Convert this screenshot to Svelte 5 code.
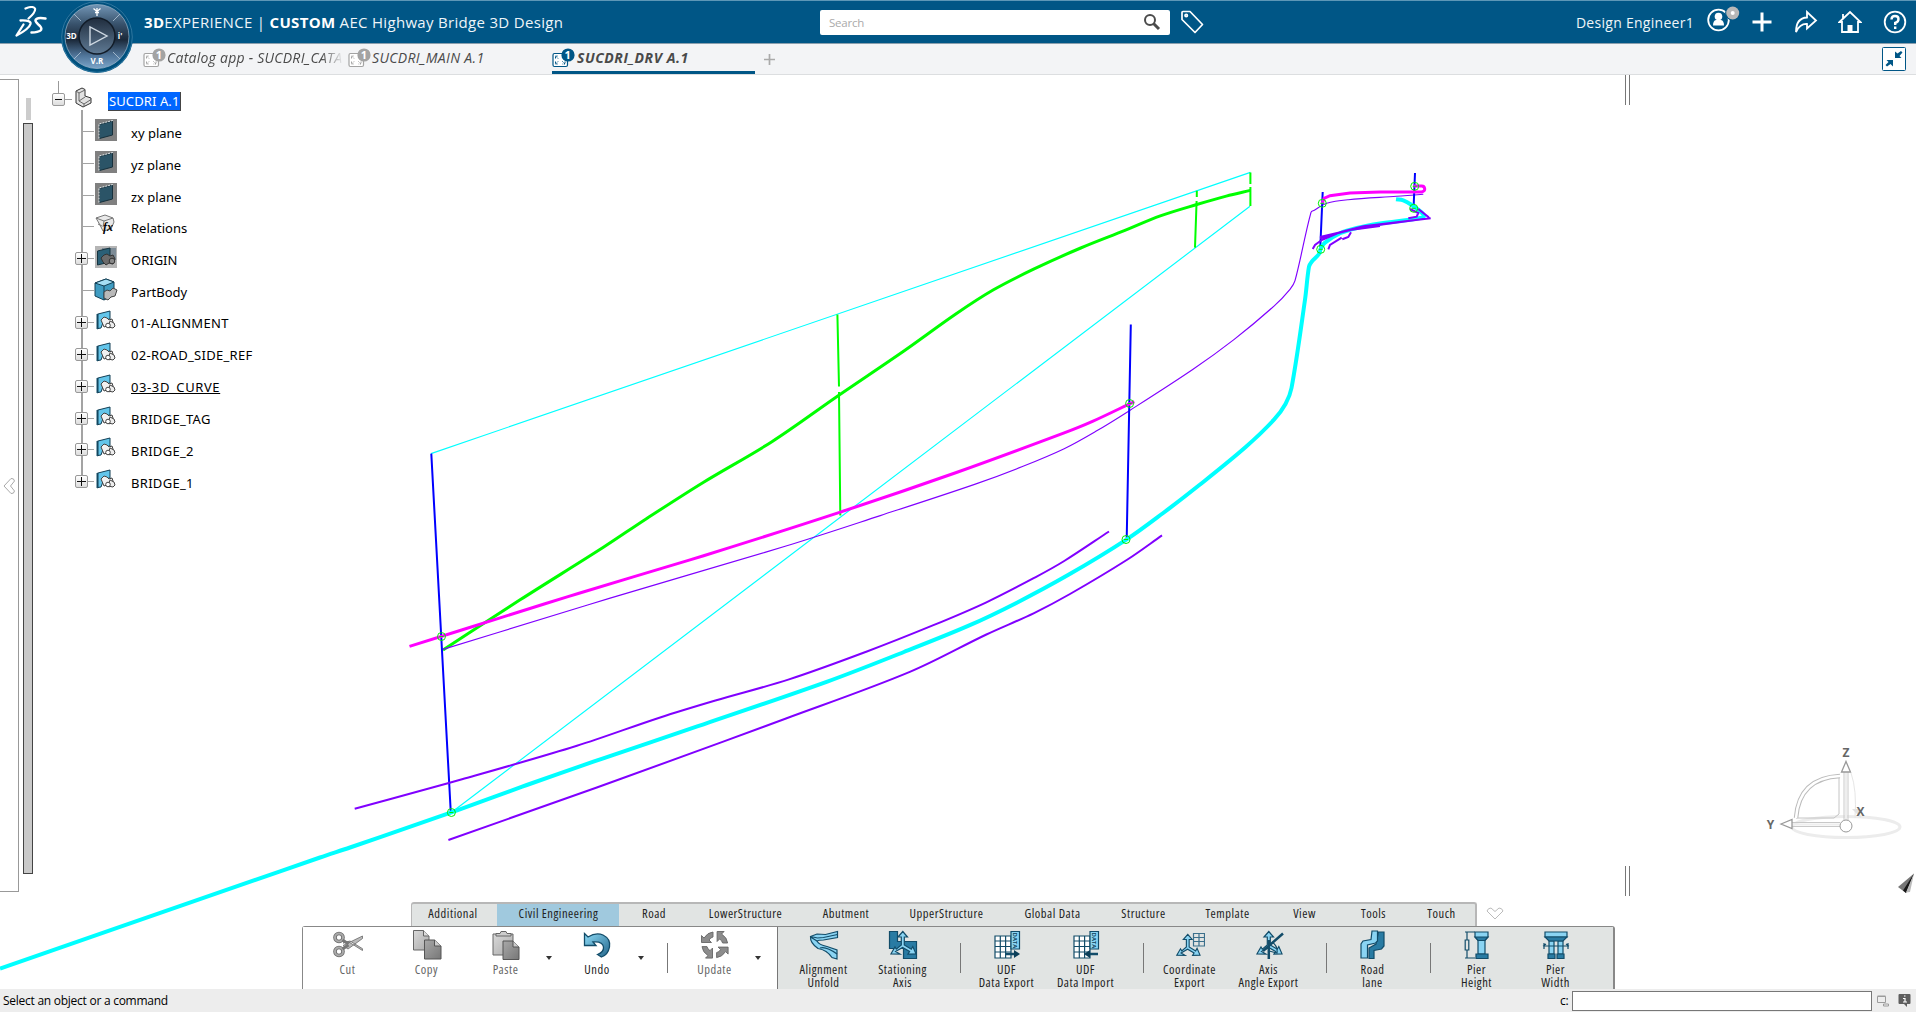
<script>
  const tree = [
    { label: 'xy plane', icon: 'plane' },
    { label: 'yz plane', icon: 'plane' },
    { label: 'zx plane', icon: 'plane' },
    { label: 'Relations', icon: 'relations' },
    { label: 'ORIGIN', icon: 'origin', open: true },
    { label: 'PartBody', icon: 'body' },
    { label: '01-ALIGNMENT', icon: 'set', open: true },
    { label: '02-ROAD_SIDE_REF', icon: 'set', open: true },
    { label: '03-3D_CURVE', icon: 'set', open: true, current: true },
    { label: 'BRIDGE_TAG', icon: 'set', open: true },
    { label: 'BRIDGE_2', icon: 'set', open: true },
    { label: 'BRIDGE_1', icon: 'set', open: true }
  ];

  const sections = ['Additional', 'Civil Engineering', 'Road', 'LowerStructure', 'Abutment', 'UpperStructure',
    'Global Data', 'Structure', 'Template', 'View', 'Tools', 'Touch'];

  const editTools = [
    { label: 'Cut', icon: 'cut', off: true },
    { label: 'Copy', icon: 'copy', off: true },
    { label: 'Paste', icon: 'paste', off: true, menu: true },
    { label: 'Undo', icon: 'undo', menu: true },
    { sep: true },
    { label: 'Update', icon: 'update', off: true, menu: true }
  ];

  const civilTools = [
    { label: 'Alignment\nUnfold', icon: 'unfold' },
    { label: 'Stationing\nAxis', icon: 'station' },
    { sep: true },
    { label: 'UDF\nData Export', icon: 'export' },
    { label: 'UDF\nData Import', icon: 'import' },
    { sep: true },
    { label: 'Coordinate\nExport', icon: 'coord' },
    { label: 'Axis\nAngle Export', icon: 'angle' },
    { sep: true },
    { label: 'Road\nlane', icon: 'lane' },
    { sep: true },
    { label: 'Pier\nHeight', icon: 'pierh' },
    { label: 'Pier\nWidth', icon: 'pierw' }
  ];

  const points = [[441.5, 636.5], [451.4, 812.5], [1129.6, 403.5], [1126, 539.5], [1322.3, 203.3], [1320.7, 249.3], [1414.7, 186.3], [1413.7, 208.3]];

  // Catmull-Rom spline through a list of [x, y] knots, as SVG path data.
  function spline(p) {
    let d = `M${p[0]}`;
    for (let i = 0; i < p.length - 1; i++) {
      const a = p[i - 1] ?? p[i], b = p[i], c = p[i + 1], e = p[i + 2] ?? c;
      const len = Math.hypot(c[0] - b[0], c[1] - b[1]);
      const h1 = len / (Math.hypot(c[0] - a[0], c[1] - a[1]) || 1) / 3;
      const h2 = len / (Math.hypot(e[0] - b[0], e[1] - b[1]) || 1) / 3;
      d += `C${b[0] + (c[0] - a[0]) * h1},${b[1] + (c[1] - a[1]) * h1} ${c[0] - (e[0] - b[0]) * h2},${c[1] - (e[1] - b[1]) * h2} ${c}`;
    }
    return d;
  }

  const profile = spline([[443, 650], [519.7, 600.1], [603.4, 547.3], [646.4, 518.7], [703.6, 482.2], [771.9, 441.7], [838.5, 395.5], [903.9, 351], [955.8, 314], [993.5, 289.8], [1033.6, 269.2], [1080.7, 248], [1124.9, 230.4], [1160.3, 215.9], [1196.8, 204.5], [1226.3, 196.1], [1250.4, 190.4]]);
  const deckLow = spline([[443, 649.4], [609.3, 598.4], [786, 546], [880.3, 515.6], [974.6, 484.4], [1021.8, 466.8], [1064.2, 448.7], [1095.4, 431.6], [1129, 410.9], [1192.7, 369.5], [1233.9, 339.6], [1274, 306.1], [1290, 289.3], [1295, 280.7], [1311, 212.3], [1314.3, 210.3], [1326.7, 203.3], [1348.3, 199.7], [1396.7, 196.3], [1423.3, 194.3]]);
  const deck = spline([[409.5, 646.4], [568, 596.6], [703.6, 555.7], [840.3, 512.1], [956.4, 472.5], [1064.2, 432.9], [1092.5, 421.4], [1134.3, 401.6]]);
  const road = spline([[0, 968.5], [320, 857.5], [350, 847.5], [451.4, 812.3], [526.8, 785], [593.4, 761.7], [703.6, 724.3], [827.3, 681.6], [903.9, 652], [968.7, 625.7], [1015.9, 603.2], [1068.9, 574.6], [1126.7, 539.4], [1163.2, 513], [1199.7, 484.8], [1245.7, 447], [1274, 419.7], [1285.5, 404], [1291.5, 388], [1305, 299.7], [1309, 266.7], [1311.7, 261.7], [1319, 254], [1321, 248], [1325, 242.7], [1340, 233.3], [1356.7, 228], [1380, 223.5], [1421.7, 217.7], [1424, 215], [1411.7, 205], [1403.3, 200.3], [1396, 199.3]]);
  const edgeLeft = spline([[354.7, 808.8], [462, 779.3], [576.9, 745.8], [659.4, 717.7], [715.4, 700.5], [789, 679.4], [865.6, 652], [933.4, 625.2], [986.4, 602.3], [1035.3, 577.3], [1064.2, 561], [1109, 531.5]]);
  const edgeRight = spline([[448.4, 840], [621, 778.8], [786, 718.5], [909.8, 671.9], [986.4, 634.5], [1033.6, 613.3], [1070, 594], [1126.7, 560], [1162, 535.4]]);
</script>

{#snippet tabIcon(active)}
  <svg class="tab-icon" class:active width="24" height="22" viewBox="0 0 24 22">
    <rect x="1" y="6.5" width="14.5" height="13" rx="1.5" fill="#fff" stroke="currentColor" stroke-width="1.2" />
    <path d="M3.5 11.5V9H6M3.5 9l3 3M13 14.500v2.500h-2.500M13 17l-3-3M3.500 14.500V17H6M3.500 17l3-3M11 9h2v2.500" fill="none" stroke="currentColor" stroke-dasharray="1.500 .7" />
    <circle cx="16" cy="8" r="6.600" fill="currentColor" />
    <text x="16" y="12" text-anchor="middle">1</text>
  </svg>
{/snippet}

{#snippet treeIcon(kind)}
  <svg width="24" height="24" viewBox="0 0 24 24">
    {#if kind === 'plane'}
      <rect x="1" y="1" width="22" height="22" fill="#808080" />
      <path d="M5.500 6.500L18.500 3v14L5.500 20.500z" fill="#2b5467" stroke="#16303c" />
      <path d="M5 20.500V6L18.500 2.500V4" fill="none" stroke="#e8eef0" stroke-dasharray="2 1" />
    {:else if kind === 'relations'}
      <path d="M2 5l9-3 8 3 1 4-3 7-8 2-3-6z" fill="#e9e9e9" stroke="#777" />
      <path d="M2 5l8 3 9-3M10 8l-1 6M4 11l4 2" fill="none" stroke="#777" />
      <text x="9" y="18" class="fx">fx</text>
    {:else if kind === 'origin'}
      <rect x="1" y="1" width="22" height="22" fill="#b5b5b5" />
      <rect x="8" y="3" width="14" height="12" fill="#7d8b96" />
      <path d="M3.500 6L16 3v14L3.500 20z" fill="#2b6077" stroke="#17343f" />
      <path d="M7 13l3-3 3-1 3 2 3-1 2 4-2 5-4-1-3 2-3-3z" fill="#6b6b6b" stroke="#333" />
      <circle cx="18" cy="16" r="2.800" fill="#888" stroke="#333" />
    {:else if kind === 'body'}
      <path d="M1 6l11-4 8 3v13l-10 5-9-4z" fill="#3f9cc2" stroke="#123f55" />
      <path d="M1 6l9 3 10-4-8-3z" fill="#a4def4" stroke="#123f55" /><path d="M10 9v14" stroke="#123f55" />
      <path d="M10 15l3-2 3 1 3-3 4 2-2 6-4 1-3 3-4-2z" fill="#b9b9b9" stroke="#444" />
    {:else}
      <path d="M3 5l2 1v13l-2 1z" fill="#17506a" stroke="#17506a" />
      <path d="M4 5l12-3v8l-6 1-3 8-3 .500z" fill="#63c5ea" stroke="#123f55" />
      <path d="M7 11l3-3 3 1 2 2 3-1 1 3-3 6-3-2-3 1z" fill="#f1f1f1" stroke="#444" />
      <path d="M14 18l2-6 4 2 1 3-2 2z" fill="#eee" stroke="#444" /><circle cx="14" cy="16.500" r="2.300" fill="#fff" stroke="#444" />
    {/if}
  </svg>
{/snippet}

{#snippet axes()}
  <path class="l" d="M13.300 15V7H10l4.800-5.500L19.500 7h-3.200v8l7 4.200 1.500-2.700 3.200 7.300-8 .200 1.600-2.600-7-4-7 4L12 24l-9-.200 4-6.800 1.300 2.200z" />
{/snippet}

{#snippet grid()}
  <path class="w" d="M3 6h16v22H3z" /><path class="n" d="M8.300 6v22M13.600 6v22M3 11h16M3 16.500h16M3 22h16" />
  <path class="l" d="M19 1.500h8.500V19H19z" />
  <text class="data" transform="translate(21 2.500) rotate(90)">DATA</text>
{/snippet}

{#snippet toolIcon(kind)}
  <svg class="tool-icon" width="30" height="30" viewBox="0 0 30 30">
    {#if kind === 'cut'}
      <path d="M10 15.500L29.500 6v2.500L15 19zM10 13l5-1.500 14.500 9v-1.800L17 11z" fill="#bbb" stroke="#757575" stroke-width=".9" />
      <circle cx="6" cy="7.500" r="4" fill="none" stroke="#6a6a6a" stroke-width="3.600" /><circle cx="6" cy="21.500" r="4" fill="none" stroke="#6a6a6a" stroke-width="3.600" />
      <circle cx="6" cy="7.500" r="4" fill="none" stroke="#aaa" stroke-width="2" /><circle cx="6" cy="21.500" r="4" fill="none" stroke="#aaa" stroke-width="2" />
      <path d="M9.500 10l6 4M9.500 19l6-4" stroke="#777" stroke-width="3" />
    {:else if kind === 'copy'}
      <path d="M1.500.5h10L17 6v14H1.500z" fill="url(#gl)" stroke="#666" /><path d="M11.500.5V6H17" fill="#ddd" stroke="#666" />
      <path d="M12.500 10h10l6.500 6v13H12.500z" fill="url(#gd)" stroke="#555" /><path d="M22.500 10v6H29" fill="#ccc" stroke="#555" />
    {:else if kind === 'paste'}
      <path d="M2 4h20v21H2z" fill="url(#gl)" stroke="#666" /><path d="M5 6V3.500h4l1-2h5l1 2h4V6z" fill="#ccc" stroke="#666" />
      <path d="M12 11h10l6 6v12.500H12z" fill="url(#gd)" stroke="#555" /><path d="M22 11v6h6" fill="#ccc" stroke="#555" />
    {:else if kind === 'undo'}
      <path d="M2.500 3.500l3.500 3.500Q14 2 21 5q8 4 6.500 12Q26 25 19.500 27l-4-2.500Q22 22 21.500 17q-1-6-10.500-5l3 3.500H2.500z" fill="url(#bl)" stroke="#124c69" stroke-width="1.300" />
    {:else if kind === 'update'}
      {#each [0, 90, 180, 270] as a}
        <path d="M4 8Q7.500 2.500 13 2v5Q10.500 7.500 9 10l2.500 2.500H1.500V5.500z" fill="#8c8c8c" stroke="#666" stroke-width=".9" transform="rotate({a} 14.800 14.800)" />
      {/each}
    {:else if kind === 'unfold'}
      <path class="l" d="M1.500 6.500L8 4l8.500.500L28.500 1.500v6l-14 2.500Q9 10 8 11q2 4 10 5.500l10 3.500v9l-5-1.500Q18 20 9 18.500 1 13 1.500 6.500z" /><path class="n" d="M1.500 6.500l7 1.500 6-.5 14-3M8 11l-6.500-4M11 18q6-2 17 6" />
    {:else if kind === 'station'}
      <path class="d" d="M1.500 1.500h8v10h19v17h-13v-10h-14z" />{@render axes()}
    {:else if kind === 'export'}
      {@render grid()}<path class="n thick" d="M13 24h10" /><path d="M22 20l6 4-6 4z" fill="#0c3f59" />
    {:else if kind === 'import'}
      {@render grid()}<path class="n thick" d="M18 24h9" /><path d="M19 20l-6 4 6 4z" fill="#0c3f59" />
    {:else if kind === 'coord'}
      <g transform="translate(-1 3) scale(.93)">{@render axes()}</g><path d="M18.500 3.500h11v12.500h-11zM18.500 7.500h11M18.500 11.500h11M24 3.500V16" fill="none" stroke="#3c708c" stroke-width="1.200" />
    {:else if kind === 'angle'}
      {@render axes()}<path class="n thick" d="M14.800 10v19M9 21L29 3.500" /><path class="n" d="M18 12q6 4 5 11l-8-2" stroke-width="2" />
    {:else if kind === 'lane'}
      <path class="d" d="M20.500 2H26v14l-2.500 3-7.500 1.500v8h-5V18l7-4z" /><path class="l" d="M14 1h5.500v10l-2 2-8 2v13H3V14l2-3 8-1.500z" />
    {:else if kind === 'pierh'}
      <path class="l" d="M13 2h13v5l-3 3v14h-7V10l-3-3z" /><path class="d" d="M13 7h13l-3 3.500h-7zM14 24h12v4.500H14z" /><path class="n" d="M3 2h10M3 28h10M5 2v8M5 20v8M3.200 10h3.600v10H3.200z" />
    {:else if kind === 'pierw'}
      <path class="l" d="M8 11h5v13H8zM17 11h5v13h-5zM4 2h22v5H4z" /><path class="d" d="M4 7h22l-4 4H8zM7 24h7v4.500H7zM16 24h7v4.500h-7z" /><path class="n" d="M2 16h26M3 13v6M27 13v6M2 16l3-2M28 16l-3-2" />
    {/if}
  </svg>
{/snippet}

{#snippet tool(t)}
  {#if t.sep}
    <span class="sep"></span>
  {:else}
    <button class="tool" class:off={t.off}>
      {@render toolIcon(t.icon)}
      <span class="tool-label">{t.label}</span>
    </button>
    {#if t.menu}<span class="menu"><i></i></span>{/if}
  {/if}
{/snippet}

<div class="app">
  <header>
    <svg class="logo" width="34" height="32" viewBox="0 0 34 32" fill="none" stroke="#fff" stroke-linecap="round" stroke-linejoin="round">
      <path d="M11.500 2.500Q19-.500 21 2.500 22 6 14.500 12.500" stroke-width="2.200" />
      <path d="M6.500 14.500Q17.500 14 16.500 18 15 23 2.500 29.500L9.500 18.500" stroke-width="2.300" />
      <path d="M31.500 12.500Q22 11 21.500 14.500 21.500 16 26 20 31 26 17.500 26.500" stroke-width="2.500" />
    </svg>
    <h1><b>3D</b>EXPERIENCE | <b>CUSTOM</b> AEC Highway Bridge 3D Design</h1>
    <div class="search">
      <span>Search</span>
      <svg width="18" height="18" viewBox="0 0 18 18" fill="none" stroke="#4b4b4b"><circle cx="7" cy="7" r="5" stroke-width="2" /><path d="M10.500 10.500l5.500 5.500" stroke-width="3" /></svg>
    </div>
    <svg class="tag" width="24" height="24" viewBox="0 0 24 24" fill="none" stroke="#fff" stroke-width="1.700" stroke-linejoin="round"><path d="M2 2.500Q2 1.500 3 1.500h7L22.500 14.500 15 22.500 2 9.500z" /><circle cx="6.200" cy="5.500" r="1.200" /></svg>
    <div class="user">
      <span class="name">Design Engineer1</span>
      <svg class="avatar" width="34" height="28" viewBox="0 0 34 28">
        <circle cx="12.500" cy="15" r="10.300" fill="none" stroke="#fff" stroke-width="1.800" />
        <circle cx="12.500" cy="11.500" r="3.800" fill="#fff" /><path d="M7 20.500q0-5 3-5.500h5q3 .5 3 5.500z" fill="#fff" />
        <circle cx="26.700" cy="8" r="7.600" fill="#005686" /><circle cx="26.700" cy="8" r="6.500" fill="#b8b8b8" /><circle cx="26.700" cy="8" r="2" fill="#fff" />
      </svg>
      <svg class="plus" width="20" height="20" viewBox="0 0 20 20" stroke="#fff" stroke-width="3"><path d="M10 .5v19M.5 10h19" /></svg>
      <svg class="share" width="24" height="24" viewBox="0 0 24 24" fill="none" stroke="#fff" stroke-width="1.800"><path d="M2 22Q2 8 13 7.500V2l9 8.500-9 8V14Q6 13.500 2 22z" /></svg>
      <svg class="home" width="24" height="24" viewBox="0 0 24 24" fill="none" stroke="#fff" stroke-width="1.800"><path d="M1.500 12L12 2l10.500 10H20v10H4V12zM5 9V4" /><path d="M9.500 15h5v7h-5z" fill="#fff" stroke="none" /></svg>
      <svg class="help" width="24" height="24" viewBox="0 0 24 24" fill="none" stroke="#fff"><circle cx="12" cy="12" r="10.300" stroke-width="1.800" /><path d="M8.500 9.500q0-3.500 3.500-3.500t3.500 3-3.300 4v2M12.200 16.500v2.500" stroke-width="2.400" /></svg>
    </div>
  </header>

  <nav class="docs">
    <div class="doc first">{@render tabIcon(false)}<span class="fade">Catalog app - SUCDRI_CATA</span></div>
    <div class="doc second">{@render tabIcon(false)}<span>SUCDRI_MAIN A.1</span></div>
    <div class="doc current">{@render tabIcon(true)}<span>SUCDRI_DRV A.1</span></div>
    <svg class="add" width="11" height="11" stroke="#aaa" stroke-width="1.700"><path d="M5.500 0v11M0 5.500h11" /></svg>
    <svg class="shrink" width="24" height="24" viewBox="0 0 24 24"><rect x=".5" y=".5" width="23" height="23" rx="1" fill="#fff" stroke="#005686" /><path d="M13 4.500V11h6.500l-2-2 3-3.500-1.500-1.500-3.500 2.500zM11 19.500V13H4.500l2 2-3 3L5 19.500 8.500 17z" fill="#005686" /></svg>
  </nav>

  <svg class="compass" width="76" height="76" viewBox="0 0 76 76">
    <defs>
      <linearGradient id="rg" x1="0" y1="0" x2="0" y2="1"><stop offset="0" stop-color="#7396b6" /><stop offset=".3" stop-color="#39536d" /><stop offset=".55" stop-color="#1b293a" /><stop offset=".8" stop-color="#50759a" /><stop offset="1" stop-color="#7ba5c9" /></linearGradient>
      <linearGradient id="cg" x1="0" y1="0" x2="0" y2="1"><stop offset="0" stop-color="#202d3e" /><stop offset="1" stop-color="#5f7a94" /></linearGradient>
      <linearGradient id="gl" x1="0" y1="0" x2="1" y2="1"><stop offset="0" stop-color="#d9d9d9" /><stop offset="1" stop-color="#aaa" /></linearGradient>
      <linearGradient id="gd" x1="0" y1="0" x2="1" y2="1"><stop offset="0" stop-color="#a8a8a8" /><stop offset="1" stop-color="#777" /></linearGradient>
      <linearGradient id="bl" x1="0" y1="0" x2="1" y2="1"><stop offset="0" stop-color="#8edcf8" /><stop offset="1" stop-color="#23658a" /></linearGradient>
    </defs>
    <circle cx="38" cy="37" r="36" fill="#00507d" /><circle cx="38" cy="37" r="35.300" fill="none" stroke="#3b83ab" stroke-width=".8" />
    <circle cx="38" cy="36.500" r="32" fill="url(#rg)" stroke="#9eb6ca" stroke-width=".7" />
    <path d="M15 14l7 7M61 14l-7 7M15 59l7-7M61 59l-7-7" stroke="#b5c8d8" stroke-width=".8" />
    <circle cx="38" cy="36" r="18" fill="url(#cg)" stroke="#121c28" stroke-width="1.500" />
    <path d="M31 27v18l17-9z" fill="none" stroke="#ced8e2" stroke-width="1.400" />
    <path d="M34.500 8.500l3.500 3 3.500-3M38 8v8M36 12.500h4" fill="none" stroke="#fff" stroke-width="1.300" />
    <text x="12.500" y="39">3D</text><text x="61" y="39">i'</text><text x="38" y="64">V.R</text>
  </svg>

  <main>
    <svg class="scene" width="1916" height="914" viewBox="0 75 1916 914">
      <path class="line thin cyan" d="M431 453.600L1250.400 172.400M452 812L1250 206.300" />
      <path class="line green" d="M837.400 314.500L839 386.500M839 392L840.300 515.600M1196.800 190.800V197M1196.600 201L1195 247.600M1250.400 172.400V184M1250.400 187V206" />
      <path class="line green profile" d={profile} />
      <path class="line thin violet" d={deckLow} />
      <path class="line blue" d="M431.300 453.600L450.800 812.700M1130.800 324.600L1126.700 539.400M1322.700 192L1320.300 247M1415 173L1413.700 205" />
      <path class="line violet" d={edgeLeft} />
      <path class="line violet" d={edgeRight} />
      <path class="line magenta" d={deck} />
      <path class="line magenta" d="M1322.300 203.500L1324 198.300 1330 195.700 1350 193 1380 192H1421.700Q1425 191 1424.700 189 1424.500 186 1421.700 186H1413.500" />
      <path class="line cyan road" d={road} />
      <path class="line violet" d="M1312.700 249L1315 245 1321.700 240 1340 232.300 1363.300 226.300 1396.700 222.300 1430.700 218.300M1320 238.300L1336.700 233.500 1360 227.500 1423.300 219M1328.300 249.300L1330 245 1341.700 237.700M1342.300 239.300L1348.300 237 1351 232.300M1320 237l30-7 30-4M1418.300 209l10 8 1 2M1408.300 218.300l8.400-1.600 1.600-3.700-8.300-4" />
      <g class="points">
        {#each points as [x, y]}<circle cx={x} cy={y} r="4" /><path d="M{x - 2} {y}h4" />{/each}
      </g>
      <path class="line rails" d="M1625.500 75v30M1629.500 75v30M1625.500 866v30M1629.500 866v30" />
      <g class="triad">
        <ellipse cx="1846" cy="827" rx="54" ry="10.500" stroke="#ececec" stroke-width="3" />
        <path d="M1851 773Q1857 790 1855 818" stroke="#e6e6e6" />
        <path d="M1839 778v36l-5 4h-38" stroke="#c4c4c4" />
        <path d="M1796 818Q1799 778 1840 776" stroke="#bbb" stroke-width="4.500" /><path d="M1796 818Q1799 778 1840 776" stroke="#fff" stroke-width="2.500" />
        <path d="M1844 772v48M1848 772v48M1792 822.500h48M1792 826.500h48" stroke="#c8c8c8" />
        <path d="M1846 772v48M1792 824.500h48" stroke="#eee" stroke-width="2" />
        <path d="M1846 761.500l4.500 10.500h-9zM1781 824l11-4.500v9z" fill="#fff" stroke="#999" stroke-width="1.300" />
        <path d="M1852 809l9 9-2-9z" fill="#e2e2e2" stroke="none" />
        <circle cx="1846" cy="826" r="6" fill="#fff" stroke="#999" />
        <text x="1846" y="756.500">Z</text><text x="1770.500" y="828.500">Y</text><text x="1860.500" y="816">X</text>
      </g>
      <path d="M1914 873.500l-16 13.500 8 6z" fill="#777" /><path d="M1914 873.500l-11 17 3 2.500z" fill="#181818" /><path d="M1914 873.500l-8 19 4-.5z" fill="#bbb" />
    </svg>

    <aside class="drawer"><svg width="13" height="18" viewBox="0 0 13 18" fill="#fff" stroke="#a9a9a9"><path d="M8 1.500L1 9l7 7.500q3 .5 3.500-2.500L7.500 9l4-5q-.5-3-3.500-2.500z" /></svg></aside>
    <div class="slider"><span class="stub"></span><span class="track"></span></div>

    <section class="tree">
      <div class="root">
        <span class="box"></span>
        <svg width="20" height="22" viewBox="0 0 20 22"><path d="M2 4l6-3 3 1.500V9l6 2v5l-8 4-7-4z" fill="#e2e2e2" stroke="#333" /><path d="M2 4l3 2 6-3M5 6v8l5 3 7-4.500M10 17v3M5 14l6-4" fill="none" stroke="#666" /></svg>
        <span class="selected">SUCDRI A.1</span>
      </div>
      <div class="children">
        {#each tree as node}
          <div class="node">
            <span class="twig">{#if node.open}<span class="box closed"></span>{/if}</span>
            {@render treeIcon(node.icon)}
            <span class="label" class:low={node.icon === 'plane'} class:caps={node.icon === 'set'} class:underlined={node.current}>{node.label}</span>
          </div>
        {/each}
      </div>
    </section>

    <section class="actions">
      <div class="tabs-row">
        <div class="tabs">
          {#each sections as s, i}<button class="tab" class:on={i === 1}>{s}</button>{/each}
        </div>
        <svg width="18" height="13" viewBox="0 0 18 13" fill="#fff" stroke="#bbb"><path d="M1 4q1-3 4-3l4 3.500L13 1q3 0 4 3L9 12z" /></svg>
      </div>
      <div class="panel">
        <div class="group edit">{#each editTools as t}{@render tool(t)}{/each}</div>
        <div class="group civil">{#each civilTools as t}{@render tool(t)}{/each}</div>
      </div>
    </section>
  </main>

  <footer>
    <span class="hint">Select an object or a command</span>
    <label for="cmd">c:</label><input id="cmd" />
    <svg width="12" height="12" fill="none" stroke="#9c9c9c"><path d="M.5 1.500h8v6h-8zM.5 1h8" /><path d="M6.500 9h5v2h-5z" /></svg>
    <svg class="info" width="13" height="13" viewBox="0 0 13 13"><path d="M1.500 0h10Q12.500 0 12.500 1v8q0 1-1 1H9v3L6 10H1.500Q.5 10 .5 9V1Q.5 0 1.500 0z" fill="#5e5e5e" /><path d="M5 4.500h2V8M5 8h4M6 2h1.500" stroke="#fff" stroke-width="1.200" fill="none" /></svg>
  </footer>
</div>

<style>
  :global(body) { background: #fff; overflow: hidden; }
  .app { position: relative; width: 1916px; height: 1012px; display: grid; grid-template-rows: 44px 31px 914px 23px; font-family: "Open Sans", "Noto Sans", sans-serif; overflow: hidden; }
  button { border: 0; padding: 0; background: none; font: inherit; letter-spacing: inherit; color: inherit; }
  svg { display: block; flex: none; }

  header { display: flex; align-items: center; background: #005686; border-top: 1px solid #5d97b7; border-bottom: 1px solid #8a9fae; color: #fff; box-sizing: border-box; }
  .logo { margin-left: 14px; margin-right: 96px; }
  h1 { margin: 0; font-size: 15px; font-weight: 400; width: 676px; white-space: nowrap; letter-spacing: .31px; color: #eef5f9; }
  h1 b { color: #fff; }
  .search { display: flex; align-items: center; justify-content: space-between; width: 350px; height: 25px; box-sizing: border-box; padding: 0 9px; background: #fff; border-radius: 2px; color: #aaa; font-size: 11.500px; letter-spacing: -.2px; }
  .tag { margin-left: 10px; }
  .user { display: flex; align-items: center; margin-left: auto; padding-right: 9px; }
  .name { font-size: 14px; letter-spacing: .28px; margin-right: 12px; color: #eef5f9; white-space: nowrap; }
  .avatar { margin-top: -6px; }
  .plus { margin-left: 12px; } .share { margin-left: 22px; } .home { margin-left: 20px; } .help { margin-left: 21px; }

  .docs { display: flex; align-items: center; background: #f3f4f6; border-bottom: 1px solid #dcdee0; box-sizing: border-box; padding-left: 143px; color: #4a4a4a; font-size: 14px; font-style: italic; letter-spacing: .34px; }
  .doc { display: flex; align-items: center; height: 30px; box-sizing: border-box; white-space: nowrap; }
  .doc > span { margin-top: -3px; }
  .tab-icon { color: #a3a3a3; margin-top: -2px; }
  .tab-icon.active { color: #005686; }
  .tab-icon text { fill: #fff; font: bold 11px "Open Sans", sans-serif; }
  .first { width: 205px; } .second { width: 204px; }
  .fade { mask-image: linear-gradient(to right, #000 88%, transparent 101%); letter-spacing: .25px; }
  .current { width: 203px; border-bottom: 3px solid #005686; font-weight: 700; padding-top: 3px; letter-spacing: .55px; }
  .current > span { margin-left: 1px; }
  .add { margin-left: 9px; }
  .shrink { margin-left: auto; margin-right: 10px; }
  .compass { position: absolute; left: 59px; top: 0; z-index: 2; }
  .compass text { fill: #fff; font: bold 8px "Open Sans", sans-serif; text-anchor: middle; }

  main { position: relative; background: #fff; }
  .scene { position: absolute; inset: 0; }
  .line { fill: none; stroke-width: 2; }
  .cyan { stroke: #0ff; }
  .green { stroke: #0f0; }
  .violet { stroke: #8000ff; }
  .blue { stroke: #00f; }
  .magenta { stroke: #f0f; stroke-width: 3; }
  .profile { stroke-width: 3; }
  .thin { stroke-width: 1.150; }
  .road { stroke-width: 4; }
  .rails { stroke: #777; stroke-width: 1; }
  .points { fill: none; stroke: #0e0; stroke-width: 1; }
  .triad { fill: none; }
  .triad text { font: bold 12px "Open Sans", sans-serif; fill: #666; text-anchor: middle; }

  .drawer { position: absolute; left: 0; top: 4px; width: 18px; height: 811px; border: solid #999; border-width: 1px 1px 1px 0; display: flex; align-items: center; }
  .drawer svg { margin: 0 0 0 3px; }
  .slider { position: absolute; left: 23px; top: 23px; width: 10px; }
  .stub { display: block; width: 5px; height: 22px; margin-left: 3px; background: #ccc; }
  .track { display: block; height: 749px; margin-top: 3px; background: #c9c9c9; border: 1px solid #444; width: 8px; }

  .tree { position: absolute; left: 52px; top: 6px; font: 13px "Noto Sans", sans-serif; color: #000; }
  .root { display: flex; align-items: center; height: 37px; position: relative; }
  .root::before { content: ""; position: absolute; left: 6px; top: 0; width: 1px; height: 12px; background: #999; }
  .root::after { content: ""; position: absolute; left: 13px; top: 18px; width: 7px; height: 1px; background: #999; }
  .root svg { margin: -4px 0 0 9px; }
  .box { display: block; width: 11px; height: 11px; border: 1px solid #999; border-radius: 2px; background: linear-gradient(#111, #111) center / 7px 1px no-repeat, linear-gradient(#fff, #ddd); }
  .box.closed { position: relative; background: linear-gradient(#111, #111) center / 9px 1px no-repeat, linear-gradient(#111, #111) center / 1px 9px no-repeat, linear-gradient(#fff, #ddd); }
  .selected { margin: 3px 0 0 14px; background: #06f; color: #fff; height: 19px; line-height: 18px; padding: 0 1px; border-right: 1px solid #444; border-bottom: 1px solid #444; box-sizing: border-box; white-space: nowrap; letter-spacing: .1px; }
  .children { position: relative; padding-left: 23px; margin-top: -4px; }
  .children::before { content: ""; position: absolute; left: 29px; top: -4px; width: 2px; height: 371px; background: #a3a3a3; }
  .node { display: flex; align-items: center; height: 31.850px; }
  .twig { position: relative; width: 19px; height: 13px; margin-top: 3px; display: block; }
  .twig::before { content: ""; position: absolute; left: 7px; right: 0; top: 6px; height: 1px; background: #a3a3a3; }
  .label { margin: 5px 0 0 13px; white-space: nowrap; }
  .low { margin-top: 7px; }
  .caps { letter-spacing: .3px; }
  .underlined { text-decoration: underline; letter-spacing: .6px; }
  .fx { font: italic bold 12px "Liberation Serif", serif; }

  .actions { position: absolute; left: 302px; top: 827px; width: 1313px; height: 87px; font-size: 12.500px; font-stretch: 87.500%; letter-spacing: .52px; color: #222; }
  .tabs-row { display: flex; align-items: center; padding-left: 109px; height: 24px; }
  .tabs { display: grid; grid-template-columns: 85px 122px 69px 114px 87px 114px 98px 84px 84px 70px 68px 68px; height: 24px; box-sizing: border-box; border: 2px solid #b7b7b7; border-width: 2px 2px 0 1px; border-radius: 3px 3px 0 0; background: #e1e4e3; width: 1066px; }
  .tabs-row > svg { margin: -2px 0 0 9px; }
  .tab { padding: 0 0 3px 1px; }
  .tab:first-child { padding: 0 3px 3px 0; }
  .on { background: #a0c9de; }
  .panel { display: flex; height: 63px; border: 1px solid #888; border-width: 1px 2px 0 1px; border-radius: 3px 3px 0 0; box-sizing: border-box; }
  .group { display: flex; padding-top: 3px; }
  .edit { width: 475px; box-sizing: border-box; padding-left: 5px; border-right: 1px solid #777; background: #fff; }
  .civil { flex: 1; padding-left: 6px; background: #e1e4e3; }
  .tool { width: 79px; display: flex; flex-direction: column; align-items: center; flex: none; }
  .tool-label { margin-top: 3px; line-height: 13px; white-space: pre; text-align: center; }
  .off { color: #666; }
  .sep { width: 25px; height: 30px; margin-top: 13px; flex: none; position: relative; }
  .edit .sep { width: 26px; }
  .sep::before { content: ""; position: absolute; left: 18px; top: 0; width: 1px; height: 30px; background: #777; }
  .menu { width: 12.500px; margin-top: 26px; display: block; flex: none; }
  .menu i { display: block; width: 0; border: 3.500px solid transparent; border-top: 4px solid #333; margin-left: 1px; }
  .tool-icon .l { fill: #8ad4f3; stroke: #124c69; stroke-width: 1.200; }
  .tool-icon .d { fill: #297ba3; stroke: #124c69; stroke-width: 1.200; }
  .tool-icon .w { fill: #fff; stroke: #124c69; stroke-width: 1.200; }
  .tool-icon .n { fill: none; stroke: #124c69; stroke-width: 1.200; }
  .tool-icon .thick { stroke-width: 2.500; }
  .data { font: bold 6px "Liberation Sans", sans-serif; letter-spacing: 0; fill: #0c3f59; }

  footer { display: flex; align-items: center; background: #ededed; font-size: 12px; letter-spacing: -.26px; color: #000; padding-left: 3px; }
  .hint { width: 1557px; }
  input { width: 300px; height: 20px; box-sizing: border-box; border: 1px solid #777; background: #fff; margin: 0 5px 0 4px; padding: 0; }
  .info { margin-left: 9px; }
</style>
